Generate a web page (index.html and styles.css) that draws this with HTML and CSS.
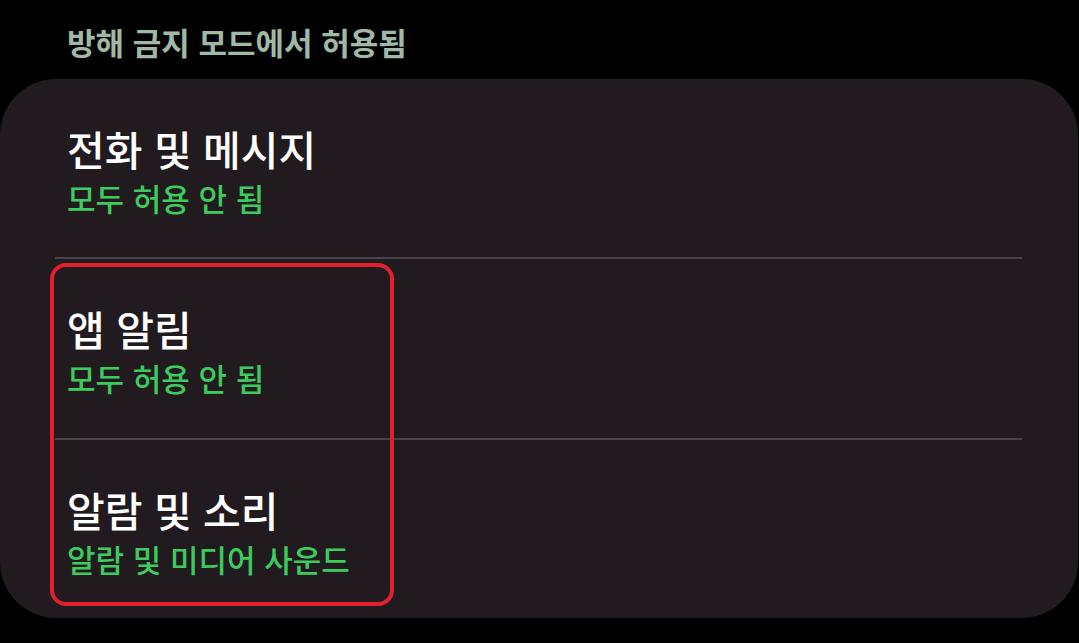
FILE: index.html
```html
<!DOCTYPE html>
<html lang="ko">
<head>
  <meta charset="UTF-8" />
  <meta name="viewport" content="width=device-width, initial-scale=1.0" />
  <title>방해 금지 모드</title>
  <link rel="stylesheet" href="styles.css">
</head>
<body>

  <div class="section-title">방해 금지 모드에서 허용됨</div>

  <div class="card">
    <div class="row">
      <div class="row-title">전화 및 메시지</div>
      <div class="row-sub">모두 허용 안 됨</div>
    </div>
    <div class="divider"></div>
    <div class="row">
      <div class="row-title">앱 알림</div>
      <div class="row-sub">모두 허용 안 됨</div>
    </div>
    <div class="divider"></div>
    <div class="row">
      <div class="row-title">알람 및 소리</div>
      <div class="row-sub">알람 및 미디어 사운드</div>
    </div>

    <!-- 강조 표시 -->
    <div class="highlight"></div>
  </div>

</body>
</html>
```

FILE: styles.css
```css
body {
  margin: 0;
  background: #000;
  font-family: "Noto Sans CJK KR", "Noto Sans", sans-serif;
  width: 1079px;
  height: 643px;
  overflow: hidden;
}
.section-title {
  height: 79px;
  box-sizing: border-box;
  padding: 20px 0 0 67px;
  font-size: 31px;
  font-weight: 700;
  color: #a0b9a7;
  line-height: 44px;
}
.card {
  position: relative;
  width: 1078px;
  height: 539px;
  background: #211b20;
  border-radius: 56px;
  display: flex;
  flex-direction: column;
}
.row {
  height: 180px;
  box-sizing: border-box;
  padding: 4px 0 0 67px;
  display: flex;
  flex-direction: column;
  justify-content: center;
}
.row:last-of-type {
  height: 178px;
}
.row-title {
  font-size: 41px;
  font-weight: 500;
  color: #fff;
  line-height: 50px;
}
.row-sub {
  margin-top: 6px;
  font-size: 31px;
  font-weight: 500;
  color: #3ccb5c;
  line-height: 38px;
}
.divider {
  height: 2px;
  margin: 0 56px 0 55px;
  background: #4a434b;
  flex-shrink: 0;
}
.highlight {
  position: absolute;
  left: 50px;
  top: 184px;
  width: 344px;
  height: 343px;
  box-sizing: border-box;
  border: 4px solid #e41f2d;
  border-radius: 16px;
}
```
